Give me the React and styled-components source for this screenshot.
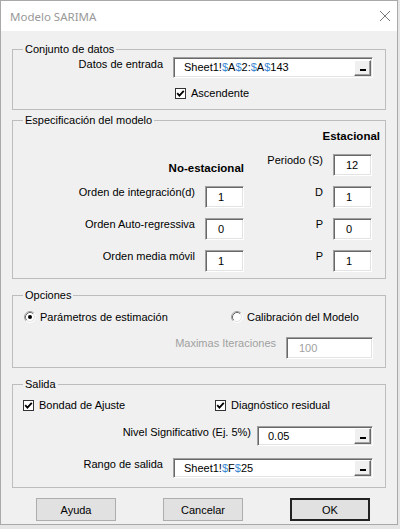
import React from 'react';
import styled, { createGlobalStyle } from 'styled-components';

const GlobalStyle = createGlobalStyle`
  html, body {
    margin: 0;
    padding: 0;
    background: #e6e6e6;
  }
  body {
    font-family: "Liberation Sans", Arial, sans-serif;
    font-size: 11px;
    color: #000;
  }
`;

const Window = styled.div`
  box-sizing: border-box;
  width: 398px;
  height: 525px;
  border: 1px solid #a9a9a9;
  background: #f0f0f0;
  display: flex;
  flex-direction: column;
  overflow: hidden;
`;

const TitleBar = styled.div`
  flex: none;
  height: 30px;
  background: #fff;
  display: flex;
  align-items: center;
  justify-content: space-between;
  padding: 0 6px 0 9px;
`;

const Title = styled.span`
  font-family: "Noto Sans", "Open Sans", sans-serif;
  font-size: 11.5px;
  color: #999;
`;

const Body = styled.div`
  flex: 1;
  padding: 12px 11px 0;
  display: flex;
  flex-direction: column;
`;

const Group = styled.fieldset`
  margin: ${(p) => p.$top}px 0 0;
  padding: 0;
  min-inline-size: 0;
  border: 1px solid #bdbdbd;
`;

const Legend = styled.legend`
  margin-left: 10px;
  padding: 0 2px;
  line-height: 13px;
`;

const Section = styled.div`
  display: flex;
  flex-direction: column;
  padding: ${(p) => p.$pad};
`;

const FieldRow = styled.div`
  display: flex;
  justify-content: flex-end;
  align-items: flex-start;
  padding-right: 12px;
  margin-top: ${(p) => p.$top || 0}px;
`;

const FieldLabel = styled.span`
  line-height: 13px;
  padding-top: ${(p) => p.$pt || 0}px;
  margin-right: ${(p) => p.$gap || 10}px;
  color: ${(p) => (p.$disabled ? '#a0a0a0' : '#000')};
`;

const Sunken = styled.div`
  box-sizing: border-box;
  background: #fff;
  border: 1px solid;
  border-color: #a0a0a0 #fff #fff #a0a0a0;
  box-shadow: inset 1px 1px 0 #696969, inset -1px -1px 0 #e3e3e3;
`;

const RefEdit = styled(Sunken)`
  width: ${(p) => p.$w}px;
  height: ${(p) => p.$h || 20}px;
  display: flex;
  align-items: center;
  justify-content: space-between;
  padding: 0 1px 0 10px;
  line-height: 13px;
`;

const NumBox = styled(Sunken)`
  width: ${(p) => p.$w || 39}px;
  height: 22px;
  padding-left: 12px;
  line-height: 20px;
  color: ${(p) => (p.$disabled ? '#a0a0a0' : '#000')};
`;

const Dollar = styled.span`
  color: #3a89d4;
`;

const PickButton = styled.span`
  box-sizing: border-box;
  width: 17px;
  height: 16px;
  background: #f0f0f0;
  border: 1px solid;
  border-color: #fff #696969 #696969 #fff;
  box-shadow: inset -1px -1px 0 #a0a0a0;
  display: flex;
  align-items: flex-end;
  justify-content: center;
  padding-bottom: 4px;

  &::after {
    content: '';
    width: 6px;
    height: 2px;
    background: #000;
  }
`;

const CheckLine = styled.span`
  display: inline-flex;
  align-items: center;
  gap: ${(p) => p.$gap || 5}px;
  line-height: 14px;
  white-space: nowrap;
`;

const Box = styled.span`
  box-sizing: border-box;
  width: 11px;
  height: 11px;
  border: 1px solid #333;
  background: #fff;
  display: flex;
  align-items: center;
  justify-content: center;
`;

const CheckRow = styled.div`
  display: grid;
  grid-template-columns: ${(p) => p.$first}px auto;
  padding-left: ${(p) => p.$left}px;
`;

const ModelGrid = styled.div`
  display: grid;
  grid-template-columns: 182px 39px 69px 39px;
  grid-template-rows: 14px repeat(4, 22px);
  column-gap: 10px;
  row-gap: 10px;
  padding: 3px 0 6px;
`;

const Heading = styled.span`
  font-weight: bold;
  font-size: 11.5px;
  line-height: 13px;
  justify-self: end;
  white-space: nowrap;
`;

const SeasonalHead = styled(Heading)`
  grid-column: 3 / span 2;
  margin-right: -8px;
`;

const PlainHead = styled(Heading)`
  grid-column: 1 / span 2;
  align-self: end;
  margin-bottom: 1px;
`;

const GridLabel = styled.span`
  justify-self: end;
  align-self: start;
  line-height: 13px;
  white-space: nowrap;
`;

const ButtonRow = styled.div`
  display: flex;
  gap: 47px;
  padding-left: 24px;
  margin-top: 10px;
`;

const Button = styled.button`
  box-sizing: border-box;
  width: 80px;
  height: 23px;
  padding: 0;
  background: #e1e1e1;
  border: ${(p) => (p.$default ? '2px solid #222' : '1px solid #adadad')};
  font-family: "Liberation Sans", Arial, sans-serif;
  font-size: 11px;
  color: #000;
`;

function CloseIcon() {
  return (
    <svg width="12" height="12" viewBox="0 0 12 12">
      <path d="M1 1 L11 11 M11 1 L1 11" stroke="#7a7a7a" strokeWidth="1" fill="none" />
    </svg>
  );
}

function Check({ label }) {
  return (
    <CheckLine>
      <Box>
        <svg width="9" height="9" viewBox="0 0 9 9">
          <path d="M1.2 4.2 L3.4 6.6 L7.8 1.8" stroke="#000" strokeWidth="1.8" fill="none" />
        </svg>
      </Box>
      {label}
    </CheckLine>
  );
}

function Radio({ label, checked }) {
  return (
    <CheckLine $gap={4}>
      <svg width="12" height="12" viewBox="0 0 12 12">
        <circle cx="6" cy="6" r="5" fill="#fff" />
        <path d="M2.11 9.89 A5.5 5.5 0 0 1 9.89 2.11" stroke="#a0a0a0" fill="none" />
        <path d="M2.82 9.18 A4.5 4.5 0 0 1 9.18 2.82" stroke="#696969" fill="none" />
        <path d="M9.89 2.11 A5.5 5.5 0 0 1 2.11 9.89" stroke="#fff" fill="none" />
        <path d="M9.18 2.82 A4.5 4.5 0 0 1 2.82 9.18" stroke="#e3e3e3" fill="none" />
        {checked && <circle cx="6" cy="6" r="2" fill="#000" />}
      </svg>
      {label}
    </CheckLine>
  );
}

function RangeValue({ text }) {
  return (
    <span>
      {text.split(/(\$)/).map((part, i) =>
        part === '$' ? <Dollar key={i}>$</Dollar> : part
      )}
    </span>
  );
}

const orderRows = [
  ['Orden de integración(d)', '1', 'D', '1'],
  ['Orden Auto-regressiva', '0', 'P', '0'],
  ['Orden media móvil', '1', 'P', '1'],
];

export default function App() {
  return (
    <>
      <GlobalStyle />
      <Window>
        <TitleBar>
          <Title>Modelo SARIMA</Title>
          <CloseIcon />
        </TitleBar>
        <Body>
          <Group $top={0}>
            <Legend>Conjunto de datos</Legend>
            <Section $pad="1px 0 9px">
              <FieldRow>
                <FieldLabel $pt={1}>Datos de entrada</FieldLabel>
                <RefEdit $w={200} $h={21}>
                  <RangeValue text="Sheet1!$A$2:$A$143" />
                  <PickButton />
                </RefEdit>
              </FieldRow>
              <CheckRow $first={100} $left={162} style={{ marginTop: 8 }}>
                <Check label="Ascendente" />
              </CheckRow>
            </Section>
          </Group>

          <Group $top={4}>
            <Legend>Especificación del modelo</Legend>
            <ModelGrid>
              <SeasonalHead>Estacional</SeasonalHead>
              <PlainHead>No-estacional</PlainHead>
              <GridLabel>Periodo (S)</GridLabel>
              <NumBox>12</NumBox>
              {orderRows.map(([label, value, seasonal, seasonalValue]) => (
                <React.Fragment key={label}>
                  <GridLabel>{label}</GridLabel>
                  <NumBox>{value}</NumBox>
                  <GridLabel>{seasonal}</GridLabel>
                  <NumBox>{seasonalValue}</NumBox>
                </React.Fragment>
              ))}
            </ModelGrid>
          </Group>

          <Group $top={10}>
            <Legend>Opciones</Legend>
            <Section $pad="8px 0 8px">
              <CheckRow $first={207} $left={11}>
                <Radio label="Parámetros de estimación" checked />
                <Radio label="Calibración del Modelo" />
              </CheckRow>
              <FieldRow $top={13}>
                <FieldLabel $disabled>Maximas Iteraciones</FieldLabel>
                <NumBox $w={87} $disabled>100</NumBox>
              </FieldRow>
            </Section>
          </Group>

          <Group $top={10}>
            <Legend>Salida</Legend>
            <Section $pad="7px 0 9px">
              <CheckRow $first={192} $left={10}>
                <Check label="Bondad de Ajuste" />
                <Check label="Diagnóstico residual" />
              </CheckRow>
              <FieldRow $top={14}>
                <FieldLabel $gap={6}>Nivel Significativo (Ej. 5%)</FieldLabel>
                <RefEdit $w={116}>
                  <span>0.05</span>
                  <PickButton />
                </RefEdit>
              </FieldRow>
              <FieldRow $top={12}>
                <FieldLabel>Rango de salida</FieldLabel>
                <RefEdit $w={200}>
                  <RangeValue text="Sheet1!$F$25" />
                  <PickButton />
                </RefEdit>
              </FieldRow>
            </Section>
          </Group>

          <ButtonRow>
            <Button>Ayuda</Button>
            <Button>Cancelar</Button>
            <Button $default>OK</Button>
          </ButtonRow>
        </Body>
      </Window>
    </>
  );
}
